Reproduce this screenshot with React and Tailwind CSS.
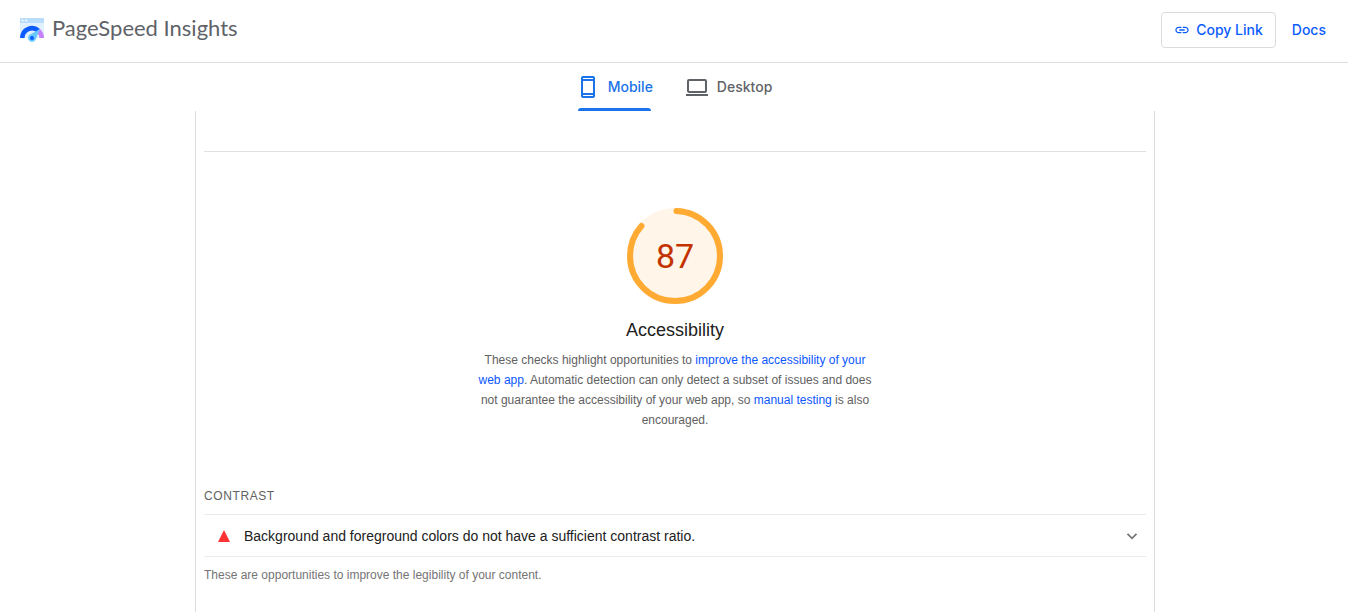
import React from "react";

const Logo = () => (
  <svg viewBox="0 0 24 24" className="size-6" aria-hidden="true">
    <path d="M1 0h22a1 1 0 0 1 1 1v19H0V1a1 1 0 0 1 1-1z" fill="#e1f0fd" />
    <path d="M1 0h22a1 1 0 0 1 1 1v4H0V1a1 1 0 0 1 1-1z" fill="#b9ddfc" />
    <circle cx="2.6" cy="2.5" r="1" fill="#fff" />
    <circle cx="6.2" cy="2.5" r="1" fill="#fff" />
    <path d="M0 20a12 12 0 0 1 20-9l-3.2 3.4A7.4 7.4 0 0 0 4.6 20z" fill="#0b5cff" />
    <path d="M20 11a12 12 0 0 1 4 9h-4.6a7.4 7.4 0 0 0-1.6-4.5z" fill="#c880fa" />
    <path d="M20 11l-4.3 10.5a4 4 0 1 1-5.6-5.1z" fill="#69c8fc" />
    <circle cx="12" cy="20" r="2" fill="#0b5cff" />
  </svg>
);

const LinkIcon = () => (
  <svg viewBox="0 0 24 24" className="size-4" fill="currentColor" aria-hidden="true">
    <path d="M3.9 12c0-1.71 1.39-3.1 3.1-3.1h4V7H7c-2.76 0-5 2.24-5 5s2.24 5 5 5h4v-1.9H7c-1.71 0-3.1-1.39-3.1-3.1zM8 13h8v-2H8v2zm9-6h-4v1.9h4c1.71 0 3.1 1.39 3.1 3.1s-1.39 3.1-3.1 3.1h-4V17h4c2.76 0 5-2.24 5-5s-2.24-5-5-5z" />
  </svg>
);

const MobileIcon = () => (
  <svg viewBox="0 0 24 24" className="size-6" fill="currentColor" aria-hidden="true">
    <path d="M17 1H7a2 2 0 0 0-2 2v18a2 2 0 0 0 2 2h10a2 2 0 0 0 2-2V3a2 2 0 0 0-2-2zm0 20H7v-1h10v1zm0-3H7V6h10v12zm0-14H7V3h10v1z" />
  </svg>
);

const DesktopIcon = () => (
  <svg viewBox="0 0 24 24" className="size-6" fill="currentColor" aria-hidden="true">
    <path d="M4 4h16a2 2 0 0 1 2 2v10a2 2 0 0 1-2 2H4a2 2 0 0 1-2-2V6a2 2 0 0 1 2-2zm0 2v10h16V6H4zM1 19h22v2H1z" />
  </svg>
);

const Tab = ({ icon, label, selected }) => (
  <button
    type="button"
    role="tab"
    aria-selected={selected}
    className={`flex h-12 flex-col justify-between text-sm font-medium ${
      selected ? "text-[#1a73e8]" : "text-[#5f6368]"
    }`}
  >
    <span className="flex items-center gap-2 pt-3">
      {icon}
      {label}
    </span>
    {selected && (
      <span className="self-stretch px-0.5">
        <span className="block h-[3px] rounded-t-full bg-[#1a73e8]" />
      </span>
    )}
  </button>
);

const Gauge = ({ score }) => {
  const length = 2 * Math.PI * 45;
  return (
    <div className="grid size-24 place-items-center">
      <svg viewBox="0 0 96 96" className="col-start-1 row-start-1 size-24" aria-hidden="true">
        <circle cx="48" cy="48" r="48" fill="#fff5e8" />
        <circle
          cx="48"
          cy="48"
          r="45"
          fill="none"
          stroke="#ffaa33"
          strokeWidth="6"
          strokeLinecap="round"
          strokeDasharray={`${(score / 100) * length - 3} ${length}`}
          strokeDashoffset="-1.5"
          transform="rotate(-90 48 48)"
        />
      </svg>
      <span className="col-start-1 row-start-1 font-[Roboto,sans-serif] text-[34px] leading-10 text-[#c33300]">
        {score}
      </span>
    </div>
  );
};

const Audit = ({ title }) => (
  <button
    type="button"
    aria-expanded="false"
    className="flex w-full items-center border-y border-[#ebebeb] pt-[11px] pr-2 pb-2.5 pl-3.5 text-left text-sm text-[#212121]"
  >
    <svg viewBox="0 0 12 12" className="mr-3.5 size-3" aria-hidden="true">
      <path d="M6 0l6 12H0z" fill="#ff3333" />
    </svg>
    <span className="flex-1">{title}</span>
    <svg viewBox="0 0 12 12" className="size-3" fill="none" stroke="#757575" strokeWidth="1.7" aria-hidden="true">
      <path d="M1.5 3.8L6 8.3l4.5-4.5" />
    </svg>
  </button>
);

const App = () => {
  return (
    <div className="min-h-screen bg-white font-['Liberation_Sans',Arial,sans-serif]">
      <header className="flex items-center justify-between border-b border-[#dadce0] pt-3 pr-[22px] pb-3.5 pl-5">
        <div className="flex items-center gap-2">
          <Logo />
          <h1 className="pb-1 font-[Lato,sans-serif] text-[22px] leading-8 text-[#5f6368]">
            PageSpeed Insights
          </h1>
        </div>
        <div className="flex items-center gap-4 font-[Inter,sans-serif] text-sm font-medium text-[#0b5cff]">
          <button
            type="button"
            className="flex h-9 items-center gap-1.5 rounded border border-[#dadce0] px-3"
          >
            <LinkIcon />
            Copy Link
          </button>
          <a href="#docs">Docs</a>
        </div>
      </header>

      <div
        role="tablist"
        className="flex justify-center gap-8 font-[Inter,sans-serif]"
      >
        <Tab icon={<MobileIcon />} label="Mobile" selected />
        <Tab icon={<DesktopIcon />} label="Desktop" selected={false} />
      </div>

      <main className="pl-0.5">
        <div className="mx-auto max-w-[960px] border-x border-[#dadce0] px-2 pt-10 pb-7">
          <section className="flex flex-col items-center border-t border-[#e0e0e0] pt-14">
            <Gauge score={87} />
            <h2 className="mt-3 text-lg leading-7 text-[#212121]">Accessibility</h2>
            <p className="mt-1.5 max-w-[400px] text-center text-xs leading-5 text-[#616161]">
              These checks highlight opportunities to{" "}
              <a href="#accessibility" className="text-[#0b57ff]">
                improve the accessibility of your web app
              </a>
              . Automatic detection can only detect a subset of issues and does
              not guarantee the accessibility of your web app, so{" "}
              <a href="#manual" className="text-[#0b57ff]">
                manual testing
              </a>{" "}
              is also encouraged.
            </p>
          </section>

          <section className="mt-14">
            <h3 className="mb-2 text-xs leading-5 tracking-wider text-[#616161] uppercase">
              Contrast
            </h3>
            <Audit title="Background and foreground colors do not have a sufficient contrast ratio." />
            <p className="mt-2 text-xs leading-5 text-[#757575]">
              These are opportunities to improve the legibility of your content.
            </p>
          </section>
        </div>
      </main>
    </div>
  );
};

export default App;
